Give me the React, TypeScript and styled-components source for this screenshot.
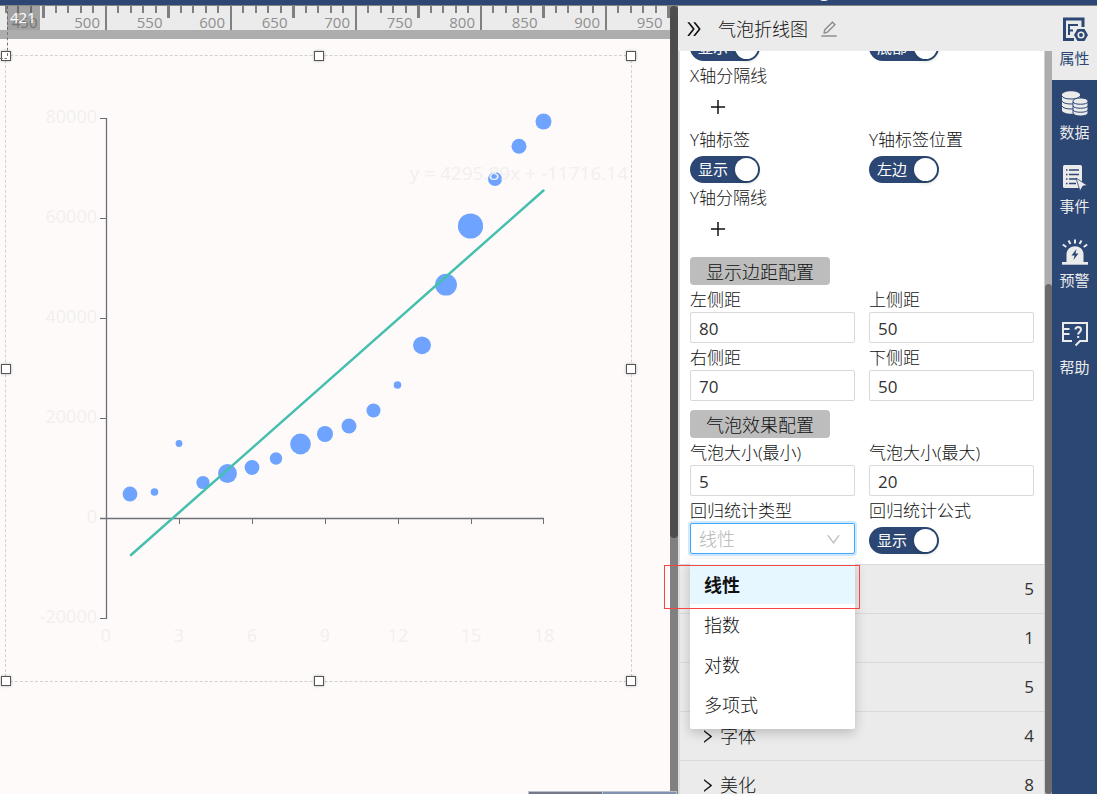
import React from "react";
import styled, { createGlobalStyle, css } from "styled-components";
import {
  AiOutlineDoubleRight,
  AiOutlineDown,
  AiOutlineEdit,
  AiOutlinePlus,
  AiOutlineRight,
} from "react-icons/ai";

const navy = "#2c4774";
const panelGrey = "#ebebeb";

const GlobalStyle = createGlobalStyle`
  * { box-sizing: border-box; }
  body {
    margin: 0;
    font-family: "Open Sans", "Noto Sans CJK SC", sans-serif;
    font-weight: 300;
    color: #111;
  }
  button, input, select { font: inherit; color: inherit; }
`;

const Page = styled.div`
  display: flex;
  flex-direction: column;
  height: 100vh;
  overflow: hidden;
`;

const TopBar = styled.header`
  position: relative;
  flex: none;
  height: 6px;
  background: ${navy};
  border-bottom: 1px solid #858585;
  overflow: hidden;
`;

const TopBarDot = styled.span`
  position: absolute;
  bottom: 4px;
  right: 264px;
  width: 18px;
  height: 18px;
  border-radius: 50%;
  background: #fff;
`;

const Workspace = styled.div`
  display: flex;
  flex: 1;
  min-height: 0;
`;

/* ---------- canvas ---------- */

const CanvasArea = styled.main`
  position: relative;
  display: flex;
  flex-direction: column;
  flex: 1;
  min-width: 0;
  background: #fffafa;
`;

const RulerStrip = styled.div`
  flex: none;
  height: 33px;
  background: ${panelGrey};
  border-bottom: 9px solid #adadad;

  svg { display: block; width: 100%; height: 24px; overflow: visible; }
  text { font-size: 15px; font-weight: 400; fill: #8f8f8f; text-anchor: end; }
`;

const Stage = styled.div`
  flex: 1;
  min-height: 0;
  overflow: hidden;
`;

const RulerBadge = styled.div`
  position: absolute;
  z-index: 2;
  top: 0;
  left: 7px;
  width: 33px;
  height: 24px;
  padding-left: 3px;
  background: rgba(90, 90, 90, 0.5);
  color: #fff;
  font-size: 15px;
  font-weight: 400;
  line-height: 23px;
`;

const GuideLine = styled.div<{ $vertical?: boolean }>`
  position: absolute;
  z-index: 1;
  left: ${(p) => (p.$vertical ? 7 : 0)}px;
  top: ${(p) => (p.$vertical ? 0 : 52)}px;
  ${(p) =>
    p.$vertical
      ? css`height: 50px; border-left: 1px dashed #777;`
      : css`width: 7px; border-top: 1px dashed #777;`}
`;

const Selection = styled.section`
  position: absolute;
  left: 5px;
  top: 49px;
  width: 627px;
  height: 627px;
  border: 1px dashed #d3d0d0;

  > svg { display: block; width: 625px; height: 625px; }
`;

const Handle = styled.span<{ $x: number; $y: number }>`
  position: absolute;
  left: ${(p) => p.$x}%;
  top: ${(p) => p.$y}%;
  width: 10px;
  height: 10px;
  margin: -5px;
  background: #fff;
  border: 1px solid #555;
  box-shadow: 0 0 3px rgba(0, 0, 0, 0.3);
`;

const ChartText = styled.text<{ $anchor?: string; $large?: boolean }>`
  font-size: ${(p) => (p.$large ? 19 : 18)}px;
  font-weight: 400;
  fill: #f1efef;
  text-anchor: ${(p) => p.$anchor ?? "middle"};
`;

const MiniMap = styled.div`
  position: absolute;
  z-index: 2;
  right: -7px;
  bottom: 0;
  display: flex;
  width: 149px;
  height: 3px;
  border: 1px solid #b9bfcb;
  border-bottom: 0;
  background: #8391b0;

  span { width: 50%; background: #757888; border-right: 1px solid #b9bfcb; }
`;

const ScrollTrack = styled.div<{ $panel?: boolean }>`
  display: flex;
  flex-direction: column;
  flex: none;
  width: ${(p) => (p.$panel ? 7 : 8)}px;
  background: ${(p) => (p.$panel ? "#adadad" : "#808080")};
`;

const ScrollThumb = styled.div<{ $share: string; $bottom?: boolean; $color: string }>`
  height: ${(p) => p.$share};
  margin-top: ${(p) => (p.$bottom ? "auto" : 0)};
  border-radius: 4px;
  background: ${(p) => p.$color};
`;

/* ---------- property panel ---------- */

const Panel = styled.aside`
  position: relative;
  display: flex;
  flex-direction: column;
  flex: none;
  width: 374px;
`;

const PanelHeader = styled.div`
  display: flex;
  align-items: center;
  flex: none;
  height: 45px;
  padding-left: 6px;
  background: ${panelGrey};
`;

const IconButton = styled.button<{ $muted?: boolean }>`
  display: flex;
  padding: 0;
  border: 0;
  background: none;
  font-size: 20px;
  color: ${(p) => (p.$muted ? "#8f8f8f" : "#111")};
`;

const PanelTitle = styled.h1`
  margin: 0 11px 0 14px;
  font-size: 18px;
  line-height: 26px;
  font-weight: 300;
`;

const PanelMain = styled.div`
  display: flex;
  flex: 1;
  min-height: 0;
`;

const PanelBody = styled.div`
  flex: 1;
  min-width: 0;
  overflow: hidden;
  background: #fff;
  border-left: 2px solid #dcdcdc;
  border-right: 1px solid #d0d0d0;
`;

const Group = styled.div<{ $space: number; $clipped?: boolean }>`
  display: grid;
  grid-template-columns: 1fr 1fr;
  column-gap: 14px;
  padding: 0 10px ${(p) => p.$space}px;
  margin-top: ${(p) => (p.$clipped ? -17 : 0)}px;
`;

const Field = styled.div`
  position: relative;
  min-width: 0;
`;

const Label = styled.label`
  display: block;
  padding-top: 2px;
  font-size: 17px;
  line-height: 25px;
  white-space: nowrap;
`;

const TextInput = styled.input`
  display: block;
  width: 100%;
  height: 31px;
  padding: 2px 8px 0;
  border: 1px solid #d9d9d9;
  border-radius: 2px;
  background: #fff;
  color: #333;
  font-size: 17px;
  font-weight: 400;
`;

const SelectBox = styled.select`
  display: block;
  appearance: none;
  width: 100%;
  height: 31px;
  padding: 0 8px;
  border: 1px solid #40a9ff;
  border-radius: 2px;
  outline: 0;
  box-shadow: 0 0 0 2px rgba(24, 144, 255, 0.2);
  background: #fff;
  color: #b5b5b5;
  font-size: 18px;
`;

const SelectArrow = styled.span`
  position: absolute;
  top: 35px;
  right: 13px;
  display: flex;
  font-size: 17px;
  color: #bfbfbf;
  pointer-events: none;
`;

const Menu = styled.ul`
  position: absolute;
  z-index: 3;
  top: 63px;
  left: 0;
  width: 100%;
  margin: 0;
  padding: 5px 0;
  list-style: none;
  background: #fff;
  border-radius: 2px;
  box-shadow: 0 4px 12px rgba(0, 0, 0, 0.2);
`;

const MenuItem = styled.li<{ $selected?: boolean }>`
  padding: 1px 14px 0;
  height: 40px;
  font-size: 18px;
  line-height: 40px;
  font-weight: ${(p) => (p.$selected ? 700 : 300)};
  background: ${(p) => (p.$selected ? "#e6f7ff" : "transparent")};
`;

/* red outline that points out the selected regression type */
const Callout = styled.div`
  position: absolute;
  z-index: 4;
  top: 559px;
  left: -14px;
  width: 196px;
  height: 44px;
  border: 1px solid #fa4343;
  pointer-events: none;
`;

const SwitchTrack = styled.label<{ $spaced?: boolean }>`
  display: flex;
  align-items: center;
  justify-content: space-between;
  width: 70px;
  height: 27px;
  margin-top: ${(p) => (p.$spaced ? 4 : 0)}px;
  padding: 0 2px 0 8px;
  border-radius: 14px;
  background: ${navy};
  color: #fff;
  font-size: 15px;
  line-height: 27px;
  font-weight: 400;

  input {
    appearance: none;
    width: 23px;
    height: 23px;
    margin: 0;
    border-radius: 50%;
    background: #fff;
    box-shadow: 0 2px 4px rgba(0, 35, 11, 0.2);
  }
`;

const AddRow = styled.div`
  grid-column: 1 / -1;
  display: flex;
  align-items: center;
  height: 37px;
  padding-left: 18px;
`;

const SectionButton = styled.button`
  grid-column: 1 / -1;
  width: 140px;
  height: 28px;
  padding: 2px 0 0;
  border: 0;
  border-radius: 4px;
  background: #bdbdbd;
  font-size: 18px;
  line-height: 26px;
`;

const AccordionRow = styled.button`
  display: flex;
  align-items: center;
  gap: 4px;
  width: 100%;
  height: 49px;
  padding: 0 10px 0 19px;
  border: 0;
  border-top: 1px solid #d9d9d9;
  background: ${panelGrey};
  font-size: 18px;
  line-height: 26px;
  text-align: left;

  svg { font-size: 17px; }
`;

const Count = styled.span`
  margin-left: auto;
  color: #333;
  font-size: 17px;
  font-weight: 400;
`;

/* ---------- navigation ---------- */

const Nav = styled.nav`
  flex: none;
  width: 45px;
  background: ${navy};
`;

const NavTab = styled.button<{ $active?: boolean; $loose?: boolean }>`
  display: flex;
  flex-direction: column;
  align-items: center;
  gap: ${(p) => (p.$loose ? 10 : 5)}px;
  width: 100%;
  height: ${(p) => (p.$loose ? 88 : 74)}px;
  padding: ${(p) => (p.$loose ? 19 : 11)}px 0 0;
  border: 0;
  background: ${(p) => (p.$active ? panelGrey : "transparent")};
  color: ${(p) => (p.$active ? navy : "#ebebeb")};
  font-size: 15px;
  line-height: 20px;
  font-weight: 400;
  white-space: nowrap;

  svg { flex: none; width: 26px; height: 26px; }
`;

const PropertyIcon = () => (
  <svg viewBox="0 0 26 26" fill="none" stroke="currentColor">
    <path d="M21 10V2H2.5V22.5H12" strokeWidth="3" />
    <path d="M7 8H16M7 13.500H11M7 7V18" strokeWidth="2" />
    <path d="M15.500 12H22.500L26 18L22.500 24H15.500L12 18Z" fill="currentColor" stroke="none" />
    <circle cx="19" cy="18" r="2.800" stroke="#ebebeb" strokeWidth="1.600" />
  </svg>
);

const DataIcon = () => (
  <svg viewBox="0 0 26 26" fill="currentColor">
    <path d="M0 4C0-1 18-1 18 4V19C18 24 0 24 0 19Z" />
    <path d="M0 5C1 9 17 9 18 5M0 10C1 14 17 14 18 10M0 15C1 19 17 19 18 15" fill="none" stroke={navy} />
    <path d="M11 10C11 6 26 6 26 10V22C26 26 11 26 11 22Z" stroke={navy} />
    <path d="M11 11C12 14 25 14 26 11M11 15C12 18 25 18 26 15M11 19C12 22 25 22 26 19" fill="none" stroke={navy} />
  </svg>
);

const EventIcon = () => (
  <svg viewBox="0 0 26 26" fill="currentColor">
    <rect x="1" y="0" width="19" height="23" rx="1.500" />
    <path d="M4 5H5.500M7 5H17M4 9.500H5.500M7 9.500H17M4 14H5.500M7 14H15M4 18.500H5.500M7 18.500H14" fill="none" stroke={navy} strokeWidth="1.300" />
    <path d="M14 13L25.500 20.500L21 21L18 26Z" stroke={navy} strokeWidth=".8" />
  </svg>
);

const AlarmIcon = () => (
  <svg viewBox="0 0 26 26" fill="currentColor">
    <path d="M4.500 23V15.500C4.500 4.500 21.500 4.500 21.500 15.500V23Z" />
    <rect x="0" y="23" width="26" height="2.700" />
    <path d="M13 .5V4.500M6.500 1.500L8.500 5M19.500 1.500L17.500 5M.8 5.500L4.300 8M25.200 5.500L21.700 8" fill="none" stroke="currentColor" strokeWidth="2" />
    <path d="M14.500 10L9.500 16.500H12.500L11.500 21L16.500 14.500H13.500Z" fill={navy} />
  </svg>
);

const HelpIcon = () => (
  <svg viewBox="0 0 26 26" fill="none" stroke="currentColor" strokeWidth="2">
    <path d="M10 20H1V2H25V20H18L13.500 24.500" />
    <path d="M1 8H7.500M1 13H7.500" />
    <path d="M13.500 8.500C13.500 5 19 5 19 8.500C19 11 16.200 10.800 16.200 13.500M16.200 15V17" />
  </svg>
);

/* ---------- data ---------- */

const rulerUnits = Array.from({ length: 54 }, (_, i) => 420 + i * 10);
const rulerX = (unit: number) => 106 + (unit - 500) * 1.25;

const bubbles: [number, number, number][] = [
  [130, 494, 7.4], [154.5, 492, 3.8], [179, 443.5, 3.4], [203, 482.5, 6.6],
  [227.5, 473.5, 9.4], [252, 467.5, 7.4], [276, 458.5, 6.2], [300.5, 444, 10.4],
  [325, 434, 8], [349, 426, 7.5], [373.5, 410.5, 7], [397.5, 385, 3.8],
  [422, 345.3, 8.9], [446, 284.7, 10.9], [470.5, 226, 12.6], [495, 179, 7],
  [519, 146.2, 7.5], [543.5, 121.5, 8],
];

const yTicks = [80000, 60000, 40000, 20000, 0, -20000];
const xTicks = [0, 3, 6, 9, 12, 15, 18];

const handles: [number, number][] = [
  [0, 0], [50, 0], [100, 0], [0, 50], [100, 50], [0, 100], [50, 100], [100, 100],
];

const Ruler = () => (
  <RulerStrip>
    <svg>
      {rulerUnits.map((u) => {
        const major = u % 100 === 0;
        const half = u % 50 === 0;
        return (
          <g key={u}>
            <rect
              x={Math.floor(rulerX(u)) - 1}
              y="0"
              width={half && !major ? 3 : 2}
              height={major ? 24 : half ? 12 : 7}
              fill="#808080"
            />
            {half && <text x={rulerX(u) - 6} y="22">{u}</text>}
          </g>
        );
      })}
    </svg>
  </RulerStrip>
);

const Chart = () => (
  <svg viewBox="6 56 625 625" role="img">
    <g fill="none" stroke="#6e7079">
      <path d="M106.500 118V619M100 518.500H544" strokeWidth="1.300" />
      {yTicks.map((v, i) => (
        <path key={v} d={`M100 ${118.5 + i * 100}H106`} />
      ))}
      {xTicks.map((v, i) => (
        <path key={v} d={`M${Math.round(106 + i * 72.9) + 0.5} 518V524`} />
      ))}
    </g>
    {yTicks.map((v, i) => (
      <ChartText key={v} $anchor="end" x="97" y={123 + i * 100}>{v}</ChartText>
    ))}
    {xTicks.map((v, i) => (
      <ChartText key={v} x={106 + i * 73} y="642">{v}</ChartText>
    ))}
    {bubbles.map(([x, y, r]) => (
      <circle key={x} cx={x} cy={y} r={r} fill="#6ea4ff" />
    ))}
    <path d="M131 555L543.500 190.500" stroke="#45bfae" strokeWidth="2.500" strokeLinecap="round" />
    <ChartText $large $anchor="end" x="628" y="180">y = 4295.89x + -11716.14</ChartText>
  </svg>
);

const Switch = ({ id, text, spaced }: { id: string; text: string; spaced?: boolean }) => (
  <SwitchTrack $spaced={spaced}>
    {text}
    <input id={id} type="checkbox" defaultChecked />
  </SwitchTrack>
);

const SwitchField = ({ id, label, text }: { id: string; label: string; text: string }) => (
  <Field>
    <Label htmlFor={id}>{label}</Label>
    <Switch id={id} text={text} spaced />
  </Field>
);

const NumberField = ({ id, label, value }: { id: string; label: string; value: string }) => (
  <Field>
    <Label htmlFor={id}>{label}</Label>
    <TextInput id={id} defaultValue={value} />
  </Field>
);

const AddLine = ({ label }: { label: string }) => (
  <>
    <Label as="div">{label}</Label>
    <AddRow>
      <IconButton type="button"><AiOutlinePlus /></IconButton>
    </AddRow>
  </>
);

const regressionTypes = ["线性", "指数", "对数", "多项式"];

const sections = [
  { name: "", count: 5 },
  { name: "", count: 1 },
  { name: "", count: 5 },
  { name: "字体", count: 4 },
  { name: "美化", count: 8 },
];

export default function App() {
  return (
    <Page>
      <GlobalStyle />
      <TopBar><TopBarDot /></TopBar>
      <Workspace>
        <CanvasArea>
          <Ruler />
          <Stage>
            <Selection>
              <Chart />
              {handles.map(([x, y]) => (
                <Handle key={`${x}-${y}`} $x={x} $y={y} />
              ))}
            </Selection>
          </Stage>
          <RulerBadge>421</RulerBadge>
          <GuideLine $vertical />
          <GuideLine />
          <MiniMap><span /></MiniMap>
        </CanvasArea>
        <ScrollTrack>
          <ScrollThumb $share="67.5%" $color="#4d4d4d" />
        </ScrollTrack>

        <Panel>
          <PanelHeader>
            <IconButton type="button"><AiOutlineDoubleRight /></IconButton>
            <PanelTitle>气泡折线图</PanelTitle>
            <IconButton type="button" $muted><AiOutlineEdit /></IconButton>
          </PanelHeader>
          <PanelMain>
            <PanelBody>
              <Group $space={10} $clipped>
                <Switch id="x-label" text="显示" />
                <Switch id="x-label-side" text="底部" />
                <AddLine label="X轴分隔线" />
                <SwitchField id="y-label" label="Y轴标签" text="显示" />
                <SwitchField id="y-label-side" label="Y轴标签位置" text="左边" />
                <AddLine label="Y轴分隔线" />
              </Group>
              <Group $space={9}>
                <SectionButton type="button">显示边距配置</SectionButton>
                <NumberField id="left" label="左侧距" value="80" />
                <NumberField id="top" label="上侧距" value="50" />
                <NumberField id="right" label="右侧距" value="70" />
                <NumberField id="bottom" label="下侧距" value="50" />
              </Group>
              <Group $space={10}>
                <SectionButton type="button">气泡效果配置</SectionButton>
                <NumberField id="min" label="气泡大小(最小)" value="5" />
                <NumberField id="max" label="气泡大小(最大)" value="20" />
                <Field>
                  <Label htmlFor="regression">回归统计类型</Label>
                  <SelectBox id="regression" defaultValue="线性">
                    {regressionTypes.map((t) => (
                      <option key={t}>{t}</option>
                    ))}
                  </SelectBox>
                  <SelectArrow><AiOutlineDown /></SelectArrow>
                  <Menu>
                    {regressionTypes.map((t, i) => (
                      <MenuItem key={t} $selected={i === 0}>{t}</MenuItem>
                    ))}
                  </Menu>
                </Field>
                <SwitchField id="formula" label="回归统计公式" text="显示" />
              </Group>
              {sections.map((s, i) => (
                <AccordionRow key={i} type="button">
                  <AiOutlineRight />
                  {s.name}
                  <Count>{s.count}</Count>
                </AccordionRow>
              ))}
            </PanelBody>
            <ScrollTrack $panel>
              <ScrollThumb $share="68.7%" $bottom $color="#6b6b6b" />
            </ScrollTrack>
          </PanelMain>
          <Callout />
        </Panel>

        <Nav>
          <NavTab type="button" $active><PropertyIcon />属性</NavTab>
          <NavTab type="button"><DataIcon />数据</NavTab>
          <NavTab type="button"><EventIcon />事件</NavTab>
          <NavTab type="button"><AlarmIcon />预警</NavTab>
          <NavTab type="button" $loose><HelpIcon />帮助</NavTab>
        </Nav>
      </Workspace>
    </Page>
  );
}
